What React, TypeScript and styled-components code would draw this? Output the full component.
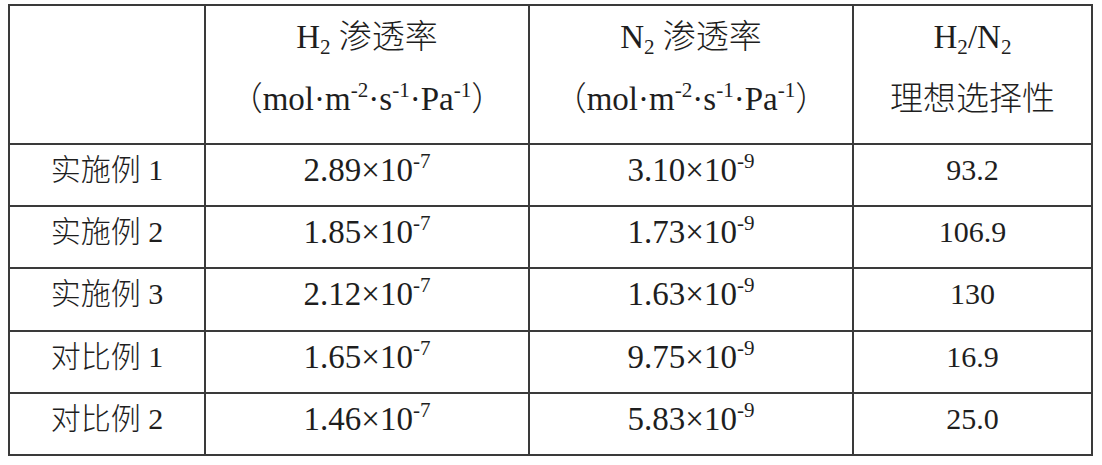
import React from 'react';
import styled, { createGlobalStyle } from 'styled-components';

type Row = {
	label: string;
	h2: string;
	n2: string;
	selectivity: string;
};

const rows: Row[] = [
	{ label: '实施例 1', h2: '2.89', n2: '3.10', selectivity: '93.2' },
	{ label: '实施例 2', h2: '1.85', n2: '1.73', selectivity: '106.9' },
	{ label: '实施例 3', h2: '2.12', n2: '1.63', selectivity: '130' },
	{ label: '对比例 1', h2: '1.65', n2: '9.75', selectivity: '16.9' },
	{ label: '对比例 2', h2: '1.46', n2: '5.83', selectivity: '25.0' },
];

const Unit = () => (
	<>
		（mol·m<Sup>-2</Sup>·s<Sup>-1</Sup>·Pa<Sup>-1</Sup>）
	</>
);

const Sci: React.FC<{ value: string; exp: string }> = ({ value, exp }) => (
	<>
		{value}×10<Sup>{exp}</Sup>
	</>
);

const App: React.FC = () => (
	<>
		<GlobalStyle />
		<Page>
			<DataTable>
				<colgroup>
					<col style={{ width: 196 }} />
					<col style={{ width: 324 }} />
					<col style={{ width: 324 }} />
					<col style={{ width: 239 }} />
				</colgroup>
				<thead>
					<tr>
						<HeadCell />
						<HeadCell>
							<HeadLine>
								H<Sub>2</Sub> 渗透率
							</HeadLine>
							<HeadLine>
								<Unit />
							</HeadLine>
						</HeadCell>
						<HeadCell>
							<HeadLine>
								N<Sub>2</Sub> 渗透率
							</HeadLine>
							<HeadLine>
								<Unit />
							</HeadLine>
						</HeadCell>
						<HeadCell>
							<HeadLine>
								H<Sub>2</Sub>/N<Sub>2</Sub>
							</HeadLine>
							<HeadLine>理想选择性</HeadLine>
						</HeadCell>
					</tr>
				</thead>
				<tbody>
					{rows.map((row, i) => (
						<BodyRow key={row.label} $tall={i === 2}>
							<Cell $size={30}>{row.label}</Cell>
							<Cell>
								<Sci value={row.h2} exp="-7" />
							</Cell>
							<Cell>
								<Sci value={row.n2} exp="-9" />
							</Cell>
							<Cell $size={30}>{row.selectivity}</Cell>
						</BodyRow>
					))}
				</tbody>
			</DataTable>
		</Page>
	</>
);

export default App;

/**
 * Styled components
 */

const GlobalStyle = createGlobalStyle`
	html, body {
		margin: 0;
		background: #fff;
	}
`;

const Page = styled.div`
	padding: 4px 0 0 8px;
	font-family: 'Liberation Serif', 'Noto Sans CJK SC', serif;
	font-size: 33px;
	font-weight: 300;
	color: #1e1e1e;
`;

const DataTable = styled.table`
	border-collapse: collapse;
	table-layout: fixed;
	width: 1085px;
	border: 2px solid #3a3a3a;
`;

const HeadCell = styled.th`
	height: 137px;
	padding: 0;
	border: 2px solid #3a3a3a;
	font-weight: 300;
	text-align: center;
	vertical-align: top;
`;

const HeadLine = styled.div`
	height: 62px;
	line-height: 62px;
	white-space: nowrap;
`;

const BodyRow = styled.tr<{ $tall?: boolean }>`
	height: ${(p) => (p.$tall ? 63 : 62)}px;
`;

const Cell = styled.td<{ $size?: number }>`
	padding: 0;
	border: 2px solid #3a3a3a;
	text-align: center;
	vertical-align: top;
	line-height: 50px;
	font-size: ${(p) => p.$size ?? 33}px;
	white-space: nowrap;
`;

const Sup = styled.sup`
	font-size: 0.64em;
	line-height: 0;
	vertical-align: 0;
	position: relative;
	top: -0.62em;
`;

const Sub = styled.sub`
	font-size: 0.64em;
	line-height: 0;
	vertical-align: 0;
	position: relative;
	top: 0.3em;
`;
